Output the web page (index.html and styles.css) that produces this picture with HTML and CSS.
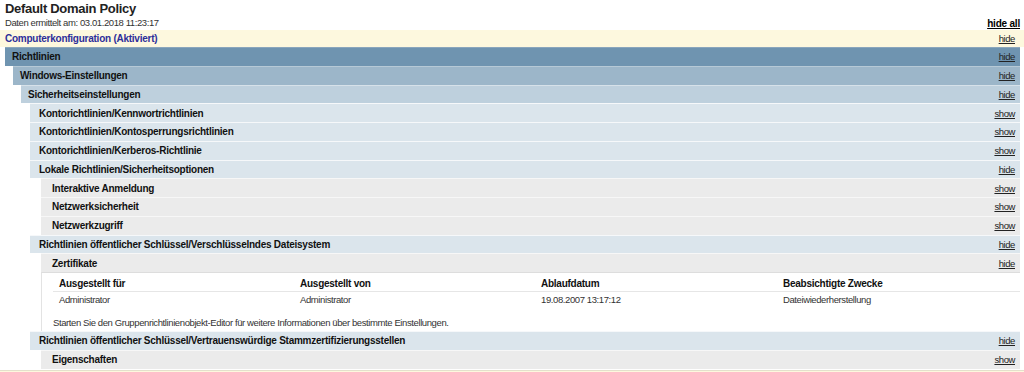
FILE: index.html
```html
<!DOCTYPE html>
<html lang="de">
<head>
  <meta charset="UTF-8" />
  <title>Default Domain Policy</title>
  <link rel="stylesheet" href="styles.css">
</head>
<body>
  <div class="title">Default Domain Policy</div>
  <div class="meta">
    <span class="date">Daten ermittelt am: 03.01.2018 11:23:17</span>
    <a class="hideall" href="#">hide all</a>
  </div>

  <div class="he0">
    <span class="sectionTitle">Computerkonfiguration (Aktiviert)</span>
    <a class="toggle" href="#">hide</a>
  </div>

  <div class="container c1">
    <div class="he he1"><span>Richtlinien</span><a class="toggle" href="#">hide</a></div>
    <div class="container c2">
      <div class="he he2"><span>Windows-Einstellungen</span><a class="toggle" href="#">hide</a></div>
      <div class="container c3">
        <div class="he he3"><span>Sicherheitseinstellungen</span><a class="toggle" href="#">hide</a></div>
        <div class="container c4">
          <div class="he he4"><span>Kontorichtlinien/Kennwortrichtlinien</span><a class="toggle" href="#">show</a></div>
          <div class="he he4"><span>Kontorichtlinien/Kontosperrungsrichtlinien</span><a class="toggle" href="#">show</a></div>
          <div class="he he4"><span>Kontorichtlinien/Kerberos-Richtlinie</span><a class="toggle" href="#">show</a></div>
          <div class="he he4"><span>Lokale Richtlinien/Sicherheitsoptionen</span><a class="toggle" href="#">hide</a></div>
          <div class="container c5">
            <div class="he he5"><span>Interaktive Anmeldung</span><a class="toggle" href="#">show</a></div>
            <div class="he he5"><span>Netzwerksicherheit</span><a class="toggle" href="#">show</a></div>
            <div class="he he5"><span>Netzwerkzugriff</span><a class="toggle" href="#">show</a></div>
          </div>
        </div>
      </div>
      <div class="container c4 c4-wide">
        <div class="he he4"><span>Richtlinien öffentlicher Schlüssel/Verschlüsselndes Dateisystem</span><a class="toggle" href="#">hide</a></div>
        <div class="container c5">
          <div class="he he5"><span>Zertifikate</span><a class="toggle" href="#">hide</a></div>
          <div class="info">
            <div class="cert-row cert-head">
              <span>Ausgestellt für</span>
              <span>Ausgestellt von</span>
              <span>Ablaufdatum</span>
              <span>Beabsichtigte Zwecke</span>
            </div>
            <div class="cert-row">
              <span>Administrator</span>
              <span>Administrator</span>
              <span>19.08.2007 13:17:12</span>
              <span>Dateiwiederherstellung</span>
            </div>
            <p class="note">Starten Sie den Gruppenrichtlinienobjekt-Editor für weitere Informationen über bestimmte Einstellungen.</p>
          </div>
        </div>
        <div class="he he4"><span>Richtlinien öffentlicher Schlüssel/Vertrauenswürdige Stammzertifizierungsstellen</span><a class="toggle" href="#">hide</a></div>
        <div class="container c5">
          <div class="he he5"><span>Eigenschaften</span><a class="toggle" href="#">show</a></div>
        </div>
      </div>
    </div>
  </div>

  <div class="he0 he0-next"></div>
</body>
</html>
```

FILE: styles.css
```css
body {
  margin: 0;
  padding: 0 4px 0 0;
  font-family: "Liberation Sans", Arial, sans-serif;
  font-size: 9.5px;
  letter-spacing: -0.4px;
  color: #000;
  background: #fff;
  overflow: hidden;
}

a {
  color: #222;
}

.title {
  padding: 1px 0 0 5px;
  height: 14px;
  font-size: 13px;
  letter-spacing: -0.3px;
  font-weight: bold;
  color: #222;
}

.meta {
  display: flex;
  justify-content: space-between;
  align-items: flex-end;
  padding-left: 5px;
  height: 15px;
  color: #333;
}

.date {
  align-self: flex-start;
  padding-top: 2px;
}

.hideall {
  font-weight: bold;
  color: #000;
  font-size: 10px;
  letter-spacing: -0.2px;
  line-height: 12px;
}

.he0 {
  display: flex;
  justify-content: space-between;
  align-items: center;
  height: 17px;
  padding: 0 9px 0 5px;
  background: #fdf8de;
  margin-right: -4px;
}

.sectionTitle {
  font-weight: bold;
  font-size: 10px;
  letter-spacing: -0.25px;
  color: #2d2f9a;
}

.he0-next {
  margin-top: 1px;
  border-top: 1px solid #e4e0cc;
}

.container.c1 { margin-left: 5px; }
.container.c2 { margin-left: 8px; }
.container.c3 { margin-left: 8px; }
.container.c4 { margin-left: 9px; }
.container.c4-wide { margin-left: 17px; }
.container.c5 { margin-left: 11px; }

.he {
  display: flex;
  justify-content: space-between;
  align-items: center;
  height: 17.75px;
  border-top: 1px solid #f3f6f8;
  color: #111;
}

.he span {
  white-space: nowrap;
  font-weight: bold;
  font-size: 10px;
  letter-spacing: -0.25px;
}

.he .toggle {
  padding-right: 5px;
}

.he1 {
  background: #6f94b0;
  padding-left: 7px;
  border-top-color: #8aa6bc;
}

.he2 {
  background: #9cb6c9;
  padding-left: 7px;
  border-top-color: #b6c9d6;
}

.he3 {
  background: #bed0dd;
  padding-left: 7px;
  border-top-color: #d6e1e9;
}

.he4 {
  background: #dbe5ec;
  padding-left: 9px;
  border-top-color: #f6f8fa;
}

.he5 {
  background: #ebebeb;
  padding-left: 11px;
  border-top-color: #f7f7f7;
}

.info {
  border-top: 1px solid #ddd;
  border-left: 1px solid #e3e3e3;
  padding: 4px 0 0 11px;
  height: 54px;
}

.cert-row {
  display: grid;
  grid-template-columns: 241px 241px 242px 1fr;
  padding-left: 6px;
  height: 13px;
  line-height: 13px;
  color: #333;
}

.cert-head {
  font-weight: bold;
  font-size: 10px;
  letter-spacing: -0.25px;
  color: #111;
  border-bottom: 1px solid #e6e6e6;
  height: 14px;
  margin-bottom: 1px;
}

.note {
  margin: 11px 0 0 0;
  color: #333;
}
```
